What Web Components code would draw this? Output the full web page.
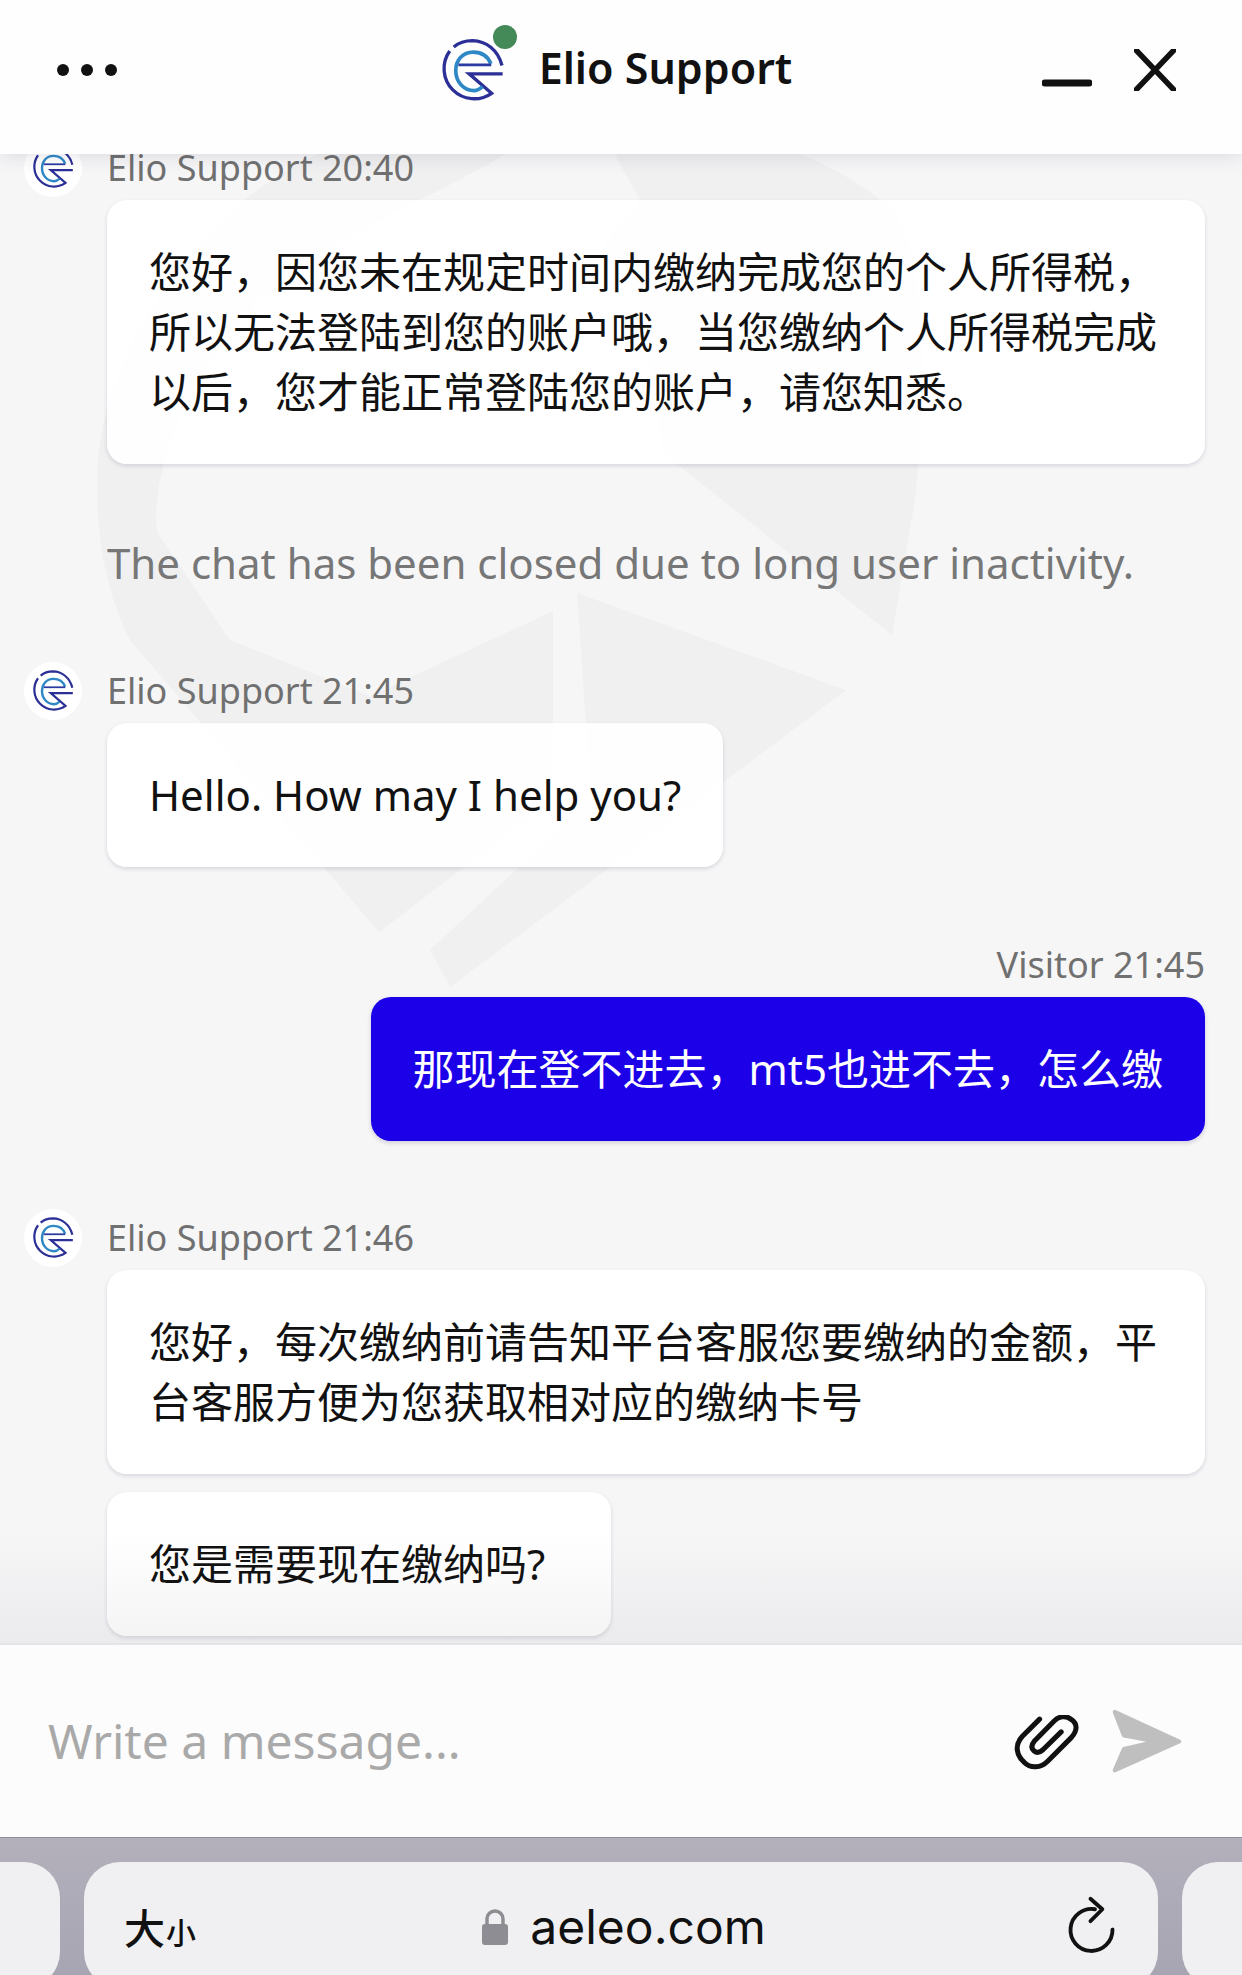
<!DOCTYPE html>
<html lang="zh">
<head>
<meta charset="utf-8">
<title>Elio Support</title>
<style>
  html,body{margin:0;padding:0;}
  body{width:1242px;height:1975px;overflow:hidden;font-family:"Noto Sans","Noto Sans CJK SC",sans-serif;}
</style>
</head>
<body>
<chat-app>
  <chat-header slot="header" title-text="Elio Support"></chat-header>
  <chat-log slot="log">
    <chat-message author="Elio Support" time="20:40">
      <chat-bubble>您好，因您未在规定时间内缴纳完成您的个人所得税，所以无法登陆到您的账户哦，当您缴纳个人所得税完成以后，您才能正常登陆您的账户，请您知悉。</chat-bubble>
    </chat-message>
    <chat-note>The chat has been closed due to long user inactivity.</chat-note>
    <chat-message author="Elio Support" time="21:45" style="margin-top:73px">
      <chat-bubble>Hello. How may I help you?</chat-bubble>
    </chat-message>
    <chat-message author="Visitor" time="21:45" visitor style="margin-top:73px">
      <chat-bubble visitor>那现在登不进去，mt5也进不去，怎么缴</chat-bubble>
    </chat-message>
    <chat-message author="Elio Support" time="21:46">
      <chat-bubble>您好，每次缴纳前请告知平台客服您要缴纳的金额，平台客服方便为您获取相对应的缴纳卡号</chat-bubble>
      <chat-bubble style="padding-right:66px">您是需要现在缴纳吗?</chat-bubble>
    </chat-message>
  </chat-log>
  <chat-input slot="input" placeholder="Write a message..."></chat-input>
  <browser-bar slot="browser" url="aeleo.com"></browser-bar>
</chat-app>

<script>
// logo drawn on the coordinates of a 3x crop, hence the odd viewBox
const LOGO_SVG = `
<svg viewBox="60 80 200 200" width="100%" height="100%" fill="none" stroke-linecap="butt">
  <path d="M248 165 C236 118 200 92 160 91 C138 91 118 98 104 110" stroke="#2b2f96" stroke-width="10"/>
  <path d="M92 122 A90 90 0 0 0 217 248 L150 190 H250" stroke="#2b2f96" stroke-width="10"/>
  <path d="M215 160 C205 135 185 125 162 125 C130 125 110 150 110 180 C110 215 135 240 165 240 C174 240 182 235 190 228" stroke="#2f88c6" stroke-width="11"/>
  <path d="M118 163 H216" stroke="#2b3aa0" stroke-width="8"/>
</svg>`;

class ChatApp extends HTMLElement {
  constructor() {
    super();
    this.attachShadow({mode:'open'}).innerHTML = `
    <style>
      :host{display:flex;flex-direction:column;position:relative;width:1242px;height:1975px;overflow:hidden;background:#f6f6f7;color:#111;}
      #mark{position:absolute;left:0;top:0;width:1242px;height:1100px;}
      ::slotted(chat-log){flex:1;min-height:0;}
      #middle{flex:1;min-height:0;display:flex;flex-direction:column;position:relative;}
      #fade{position:absolute;left:0;right:0;bottom:0;height:110px;background:linear-gradient(rgba(60,60,80,0),rgba(60,60,80,.06));}
    </style>
    <svg id="mark" viewBox="0 0 1242 1100" fill="#f0f0f1">
      <path d="M625 90 C480 85 330 130 245 200 C160 270 97 380 97 484 C97 550 110 600 130 640 L379 932 L553 800 V611 L370 696 L230 640 L157 532 C150 470 190 370 260 300 C340 230 450 190 507 153 L562 103Z"/>
      <path d="M577 593 L846 690 L450 987 L430 950 L591 800Z"/>
      <path d="M594 117 C700 110 830 150 895 213 C930 270 925 400 915 500 L892 635 L663 453 L640 300 L600 250 L640 200Z"/>
    </svg>
    <slot name="header"></slot>
    <div id="middle"><slot name="log"></slot><div id="fade"></div></div>
    <slot name="input"></slot>
    <slot name="browser"></slot>`;
  }
}

class ChatHeader extends HTMLElement {
  constructor() {
    super();
    this.attachShadow({mode:'open'}).innerHTML = `
    <style>
      :host{display:grid;grid-template-columns:1fr auto 1fr;align-items:center;box-sizing:border-box;height:154px;padding:0 68px 14px 57px;background:rgba(255,255,255,.9);box-shadow:0 2px 18px rgba(40,40,70,.13);position:relative;z-index:2;}
      #dots{display:flex;gap:12px;}
      #dots i{width:12px;height:12px;border-radius:50%;background:#111;}
      #mid{display:flex;align-items:center;gap:33px;}
      #logo{position:relative;width:67px;height:67px;}
      #online{position:absolute;left:54px;top:-12px;width:24px;height:24px;border-radius:50%;background:#448a58;}
      #title{font-size:43px;font-weight:600;color:#111;line-height:50px;padding-bottom:4px;}
      #btns{display:flex;justify-content:flex-end;align-items:flex-start;gap:42px;margin-right:-2px;}
    </style>
    <div id="dots"><i></i><i></i><i></i></div>
    <div id="mid"><div id="logo">${LOGO_SVG}<span id="online"></span></div><div id="title"></div></div>
    <div id="btns">
      <svg width="50" height="42" viewBox="0 0 50 42"><path d="M3 34 H47" stroke="#111" stroke-width="7" stroke-linecap="round"/></svg>
      <svg width="42" height="42" viewBox="0 0 42 42"><path d="M2 1 L40 41 M40 1 L2 41" stroke="#111" stroke-width="5.5" stroke-linecap="round"/></svg>
    </div>`;
    this.shadowRoot.getElementById('title').textContent = this.getAttribute('title-text');
  }
}

class ChatLog extends HTMLElement {
  constructor() {
    super();
    this.attachShadow({mode:'open'}).innerHTML = `
    <style>
      :host{display:flex;flex-direction:column;justify-content:flex-end;box-sizing:border-box;overflow:hidden;padding:0 37px 7px 0;position:relative;}
    </style>
    <slot></slot>`;
  }
}

class ChatMessage extends HTMLElement {
  constructor() {
    super();
    let visitor = this.hasAttribute('visitor');
    this.attachShadow({mode:'open'}).innerHTML = `
    <style>
      :host{display:block;flex:none;margin-top:72px;}
      #head{display:flex;align-items:center;height:50px;margin-bottom:7px;padding-left:24px;}
      #head.right{justify-content:flex-end;padding:0;}
      #ava{width:58px;height:58px;margin:-4px 25px -4px 0;border-radius:50%;background:#fff;display:flex;align-items:center;justify-content:center;flex:none;}
      #ava div{width:44px;height:44px;}
      #meta{font-size:36px;color:#707070;line-height:50px;white-space:nowrap;}
      #list{display:flex;flex-direction:column;gap:18px;align-items:flex-start;padding-left:107px;}
      #list.right{align-items:flex-end;}
    </style>
    <div id="head" class="${visitor ? 'right' : ''}">
      ${visitor ? '' : `<div id="ava"><div>${LOGO_SVG}</div></div>`}
      <span id="meta"></span>
    </div>
    <div id="list" class="${visitor ? 'right' : ''}"><slot></slot></div>`;
    this.shadowRoot.getElementById('meta').textContent = this.getAttribute('author') + ' ' + this.getAttribute('time');
  }
}

class ChatBubble extends HTMLElement {
  constructor() {
    super();
    this.attachShadow({mode:'open'}).innerHTML = `
    <style>
      :host{display:block;box-sizing:border-box;max-width:1098px;padding:42px;font-size:42px;line-height:60px;border-radius:20px;background:rgba(255,255,255,.93);color:#111;box-shadow:0 2px 4px rgba(30,30,70,.14);}
      :host([visitor]){background:#1b00e8;color:#fff;box-shadow:0 2px 4px rgba(30,30,70,.18);}
    </style>
    <slot></slot>`;
  }
}

class ChatNote extends HTMLElement {
  constructor() {
    super();
    this.attachShadow({mode:'open'}).innerHTML = `
    <style>
      :host{display:block;flex:none;margin-top:69px;padding-left:107px;font-size:42px;line-height:60px;color:#777;white-space:nowrap;}
    </style>
    <slot></slot>`;
  }
}

class ChatInput extends HTMLElement {
  constructor() {
    super();
    this.attachShadow({mode:'open'}).innerHTML = `
    <style>
      :host{display:flex;align-items:center;box-sizing:border-box;height:194px;padding:0 60px 0 48px;background:#fcfcfc;border-top:2px solid #e4e4e6;position:relative;z-index:1;}
      #text{flex:1;font-size:48px;line-height:60px;color:#a9a9a9;}
      #clip{width:66px;height:56px;margin:4px 32px 0 0;}
      #send{width:70px;height:65px;}
    </style>
    <div id="text"></div>
    <svg id="clip" viewBox="100 105 196 166" fill="none"><path d="M176 117 L125 168 C100 195 108 225 130 245 C150 265 180 262 200 242 L270 172 C290 150 288 130 270 118 C252 104 232 110 220 122 L160 183 C150 195 152 205 160 212 C170 220 178 215 186 208 L240 155" stroke="#111" stroke-width="15" stroke-linecap="round" stroke-linejoin="round"/></svg>
    <svg id="send" viewBox="400 88 206 190"><path d="M408 96 L598 183 L408 268 L435 205 L530 183 L435 165Z" fill="#bfbfbf" stroke="#bfbfbf" stroke-width="12" stroke-linejoin="round"/></svg>`;
    this.shadowRoot.getElementById('text').textContent = this.getAttribute('placeholder');
  }
}

class BrowserBar extends HTMLElement {
  constructor() {
    super();
    this.attachShadow({mode:'open'}).innerHTML = `
    <style>
      :host{display:flex;gap:24px;box-sizing:border-box;height:138px;padding-top:24px;background:linear-gradient(#b3b0bc,#a6a5b1);border-top:1px solid #8f8da0;overflow:hidden;position:relative;z-index:1;}
      .tab{height:126px;background:#f0f0f2;border-radius:36px;flex:none;}
      #prev{width:60px;border-radius:0 36px 36px 0;}
      #next{width:60px;border-radius:36px 0 0 36px;}
      #cur{width:1074px;box-sizing:border-box;display:grid;grid-template-columns:1fr auto 1fr;align-items:center;padding:0 42px 0 40px;height:126px;}
      #aa{font-family:"Noto Sans CJK SC",sans-serif;font-weight:500;color:#111;display:flex;align-items:baseline;padding-top:4px;}
      #aa b{font-size:41px;font-weight:500;line-height:50px;}
      #aa small{font-size:30px;font-weight:500;margin-left:1px;}
      #addr{display:flex;align-items:center;gap:22px;padding:4px 0 0 8px;}
      #url{font-family:Inter,"Liberation Sans",sans-serif;font-size:48px;color:#111;line-height:60px;}
      #reload{justify-self:end;width:49px;height:60px;}
    </style>
    <div id="prev" class="tab"></div>
    <div id="cur" class="tab">
      <div id="aa"><b>大</b><small>小</small></div>
      <div id="addr">
        <svg width="26" height="38" viewBox="0 0 26 38"><path d="M5 18 V11 A8 8 0 0 1 21 11 V18" fill="none" stroke="#8e8d93" stroke-width="3.5"/><rect x="0" y="16" width="26" height="21" rx="3" fill="#8e8d93"/></svg>
        <span id="url"></span>
      </div>
      <svg id="reload" viewBox="85 50 140 170" fill="none"><path d="M215 148 A60 60 0 1 1 165 90" stroke="#111" stroke-width="11" stroke-linecap="round"/><path d="M152 60 L186 90 L152 124" stroke="#111" stroke-width="11" stroke-linecap="round" stroke-linejoin="round"/></svg>
    </div>
    <div id="next" class="tab"></div>`;
    this.shadowRoot.getElementById('url').textContent = this.getAttribute('url');
  }
}

customElements.define('chat-app', ChatApp);
customElements.define('chat-header', ChatHeader);
customElements.define('chat-log', ChatLog);
customElements.define('chat-message', ChatMessage);
customElements.define('chat-bubble', ChatBubble);
customElements.define('chat-note', ChatNote);
customElements.define('chat-input', ChatInput);
customElements.define('browser-bar', BrowserBar);
</script>
</body>
</html>
